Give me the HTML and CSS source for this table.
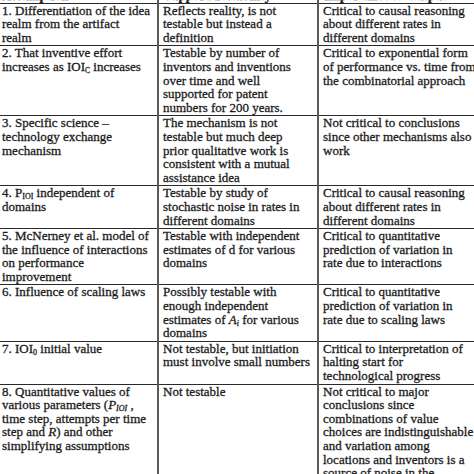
FILE: index.html
```html
<!DOCTYPE html>
<html>
<head>
<meta charset="utf-8">
<link rel="stylesheet" href="styles.css">
</head>
<body>
<div class="frame">
<table class="grid">
  <colgroup>
    <col class="c1"><col class="c2"><col class="c3">
  </colgroup>
  <thead>
    <tr class="head">
      <th>Assumption</th>
      <th>Support/Testability</th>
      <th>Importance to Output</th>
    </tr>
  </thead>
  <tbody>
    <tr>
      <td>1. Differentiation of the idea<br>realm from the artifact<br>realm</td>
      <td>Reflects reality, is not<br>testable but instead a<br>definition</td>
      <td>Critical to causal reasoning<br>about different rates in<br>different domains</td>
    </tr>
    <tr>
      <td>2. That inventive effort<br>increases as IOI<sub class="sc">C</sub> increases</td>
      <td>Testable by number of<br>inventors and inventions<br>over time and well<br>supported for patent<br>numbers for 200 years.</td>
      <td>Critical to exponential form<br>of performance vs. time from<br>the combinatorial approach</td>
    </tr>
    <tr>
      <td>3. Specific science –<br>technology exchange<br>mechanism</td>
      <td>The mechanism is not<br>testable but much deep<br>prior qualitative work is<br>consistent with a mutual<br>assistance idea</td>
      <td>Not critical to conclusions<br>since other mechanisms also<br>work</td>
    </tr>
    <tr>
      <td>4. P<sub>IOI</sub> independent of<br>domains</td>
      <td>Testable by study of<br>stochastic noise in rates in<br>different domains</td>
      <td>Critical to causal reasoning<br>about different rates in<br>different domains</td>
    </tr>
    <tr>
      <td>5. McNerney et al. model of<br>the influence of interactions<br>on performance<br>improvement</td>
      <td>Testable with independent<br>estimates of d for various<br>domains</td>
      <td>Critical to quantitative<br>prediction of variation in<br>rate due to interactions</td>
    </tr>
    <tr>
      <td>6. Influence of scaling laws</td>
      <td>Possibly testable with<br>enough independent<br>estimates of <i>A<sub>i</sub></i> for various<br>domains</td>
      <td>Critical to quantitative<br>prediction of variation in<br>rate due to scaling laws</td>
    </tr>
    <tr>
      <td>7. IOI<sub>0</sub> initial value</td>
      <td>Not testable, but initiation<br>must involve small numbers</td>
      <td>Critical to interpretation of<br>halting start for<br>technological progress</td>
    </tr>
    <tr>
      <td>8. Quantitative values of<br>various parameters (<i>P<sub>IOI</sub></i> ,<br>time step, attempts per time<br>step and <i>R</i>) and other<br>simplifying assumptions</td>
      <td>Not testable</td>
      <td>Not critical to major<br>conclusions since<br>combinations of value<br>choices are indistinguishable<br>and variation among<br>locations and inventors is a<br>source of noise in the<br>results</td>
    </tr>
  </tbody>
</table>
</div>
</body>
</html>
```
FILE: styles.css
```css
html, body {
  margin: 0;
  padding: 0;
  background: #ffffff;
}

.frame {
  width: 474px;
  height: 474px;
  overflow: hidden;
}

.grid {
  border-collapse: collapse;
  table-layout: fixed;
  width: 660px;
  margin-top: -12px;
  margin-left: -5px;
  font-family: "Liberation Serif", "Times New Roman", serif;
  font-size: 13px;
  line-height: 13.6px;
  color: #1c1c1c;
  -webkit-text-stroke: 0.3px #1c1c1c;
}

.c1 { width: 162px; }
.c2 { width: 160px; }
.c3 { width: 338px; }

.grid th,
.grid td {
  text-align: left;
  vertical-align: top;
  white-space: nowrap;
  padding: 0 4px 1px 5px;
  border-top: 1px solid #2a2a2a;
  border-bottom: 1px solid #2a2a2a;
  border-left: 2px solid #5a5a5a;
  border-right: 2px solid #5a5a5a;
}

.grid td:nth-child(2),
.grid td:nth-child(3) {
  padding-left: 4px;
}

.grid th {
  font-weight: bold;
  padding-bottom: 0;
}

.grid sub {
  font-size: 8px;
  line-height: 0;
  vertical-align: -2px;
}

.grid sub.sc {
  font-size: 7.5px;
}
```
